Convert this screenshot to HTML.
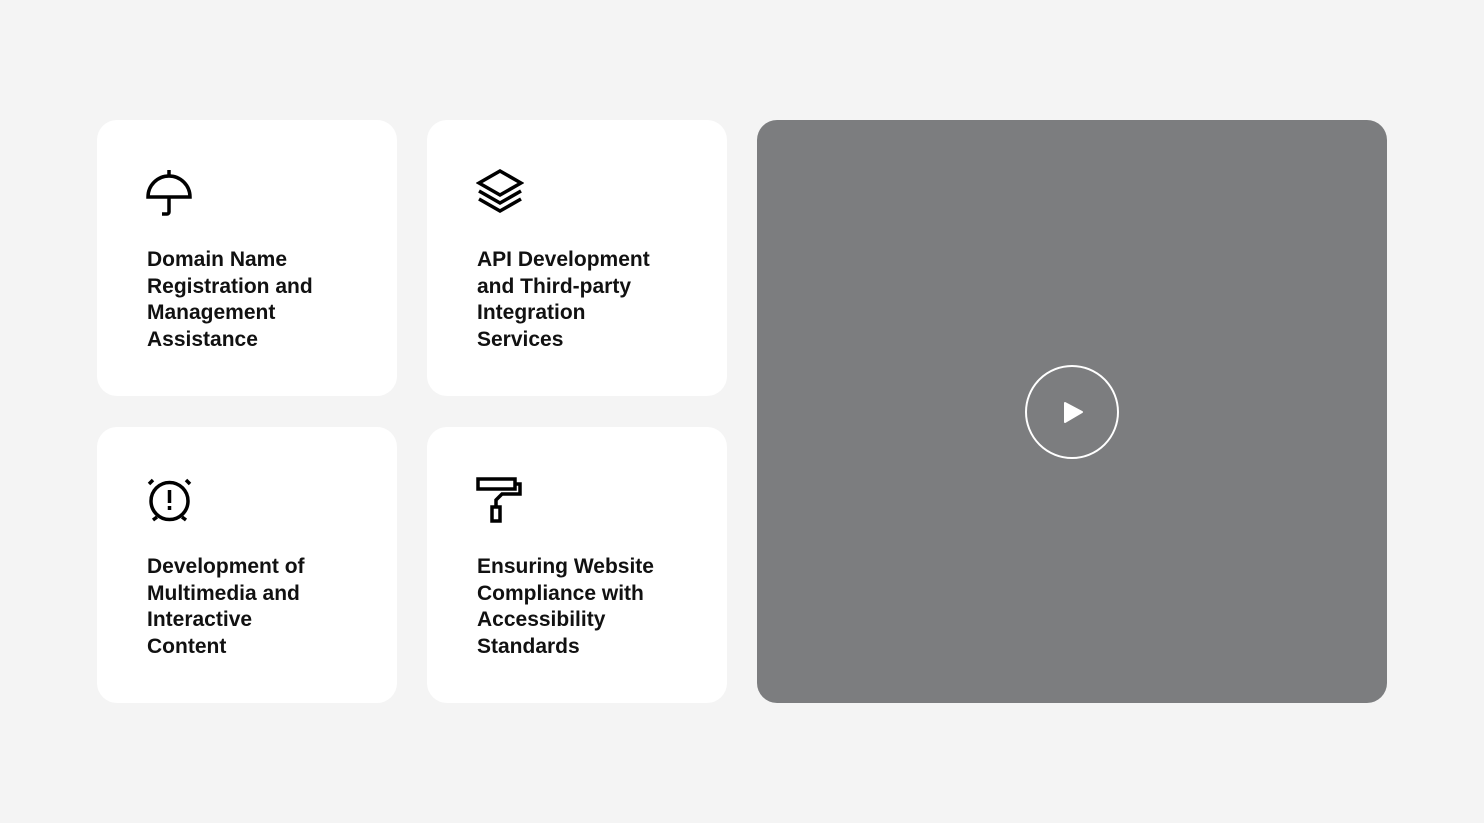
<!DOCTYPE html>
<html><head><style>
body{margin:0;width:1484px;height:823px;background:#f4f4f4;position:relative;font-family:"Liberation Sans",sans-serif;overflow:hidden}
.card{position:absolute;width:300px;height:276px;background:#fff;border-radius:20px}
.card svg{position:absolute;left:49px;top:49px}
.card p{position:absolute;left:50px;top:127px;margin:0;font-size:21px;font-weight:bold;line-height:26.5px;color:#111;letter-spacing:0;white-space:nowrap}
.video{position:absolute;left:757px;top:120px;width:630px;height:583px;background:#7c7d7f;border-radius:20px}
.play{position:absolute;left:268px;top:245px;width:90px;height:90px;border:2px solid #fff;border-radius:50%}
</style></head><body>
<div class="card" style="left:97px;top:120px">
<svg width="48" height="48" viewBox="0 0 48 48" fill="none" stroke="#000" stroke-width="3.5"><path d="M23 1v5"/><path d="M2 28A21 21 0 0 1 44 28Z"/><path d="M23 28v15a2 2 0 0 1-2 2h-5"/></svg>
<p>Domain Name<br>Registration and<br>Management<br>Assistance</p></div>
<div class="card" style="left:427px;top:120px">
<svg width="48" height="48" viewBox="0 0 48 48" fill="none" stroke="#000" stroke-width="3.5"><path d="M24 2L45 14L24 26L3 14Z"/><path d="M3 22L24 34L45 22"/><path d="M3 30L24 42L45 30"/></svg>
<p>API Development<br>and Third-party<br>Integration<br>Services</p></div>
<div class="card" style="left:97px;top:427px">
<svg width="48" height="48" viewBox="0 0 48 48" fill="none" stroke="#000" stroke-width="3.5"><circle cx="23.5" cy="25" r="18.5"/><path d="M23.5 14v13M23.5 30v4"/><path d="M3 8l4-4M44 8l-4-4M7 44l4-3M40 44l-4-3"/></svg>
<p>Development of<br>Multimedia and<br>Interactive<br>Content</p></div>
<div class="card" style="left:427px;top:427px">
<svg width="48" height="48" viewBox="0 0 48 48" fill="none" stroke="#000" stroke-width="3.5"><rect x="2" y="3" width="37" height="10"/><path d="M39 8h5v10H26l-6 6v6"/><rect x="16" y="31" width="8" height="14"/></svg>
<p>Ensuring Website<br>Compliance with<br>Accessibility<br>Standards</p></div>
<div class="video"><div class="play"><svg width="90" height="90" viewBox="0 0 90 90"><path d="M38 36L55 45L38 55Z" fill="#fff" stroke="#fff" stroke-width="2" stroke-linejoin="round"/></svg></div></div>
</body></html>
